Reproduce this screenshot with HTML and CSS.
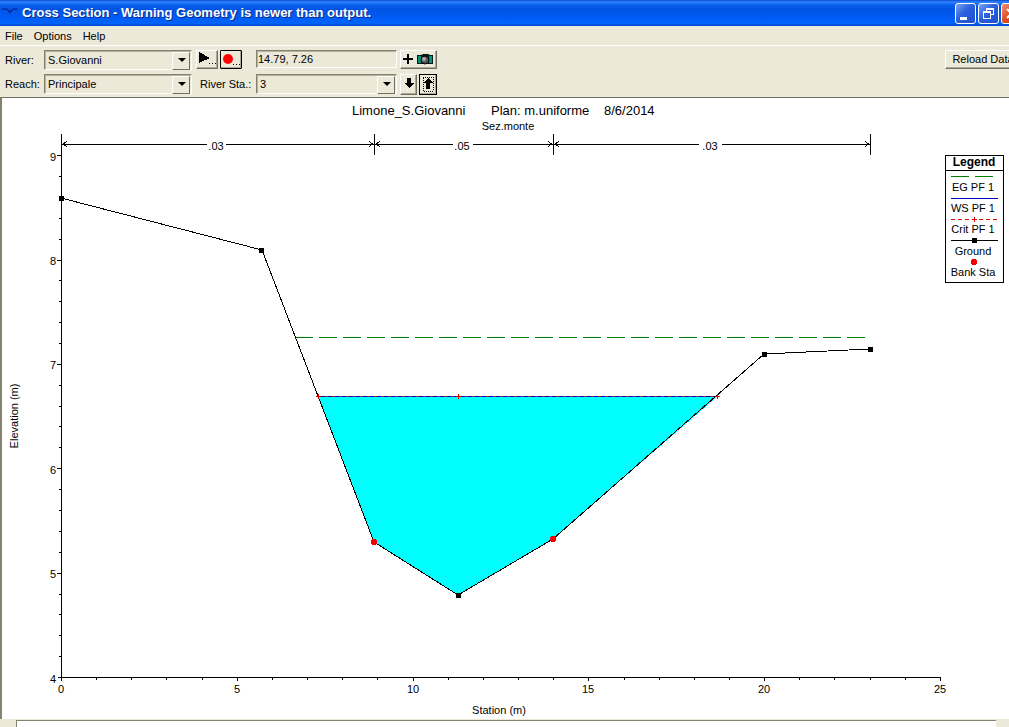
FILE: index.html
```html
<!DOCTYPE html>
<html lang="en">
<head>
<meta charset="utf-8">
<title>Cross Section</title>
<link rel="stylesheet" href="styles.css">
</head>
<body>
<header class="titlebar">
  <svg class="app-icon" width="16" height="16" viewBox="0 0 16 16" aria-hidden="true"><path d="M0 4H5L8 8L11 4H15M6 6H10" fill="none" stroke="#061c86"/></svg>
  <h1 class="title">Cross Section - Warning Geometry is newer than output.</h1>
  <div class="window-buttons">
    <button class="winbtn" aria-label="Minimize"><svg width="19" height="19" viewBox="0 0 19 19"><path d="M4 13H11V16H4Z" fill="#fff"/></svg></button>
    <button class="winbtn" aria-label="Restore"><svg width="19" height="19" viewBox="0 0 19 19" shape-rendering="crispEdges"><path d="M7 4H15V11H12V10H14V6H8V7H7ZM4 7H12V15H4ZM5 9V14H11V9Z" fill="#fff" fill-rule="evenodd"/></svg></button>
    <button class="winbtn close" aria-label="Close"><svg width="19" height="19" viewBox="0 0 19 19"><path d="M5 5L14 14M14 5L5 14" stroke="#fff" stroke-width="2"/></svg></button>
  </div>
</header>
<nav class="menubar">
  <button class="menu">File</button>
  <button class="menu">Options</button>
  <button class="menu">Help</button>
</nav>
<section class="toolbar">
  <div class="row">
    <label class="label" for="river">River:</label>
    <span class="combo"><select id="river"><option>S.Giovanni</option></select></span>
    <span class="play-group">
      <button class="btn play" aria-label="Animate"><svg width="18" height="16" viewBox="0 0 18 16" shape-rendering="crispEdges"><path d="M1 1L12 7L1 12Z"/><path d="M11 12h1v1h-1zM14 12h1v1h-1zM17 12h1v1h-1z"/></svg></button>
      <button class="btn record" aria-label="Record"><svg width="19" height="16" viewBox="0 0 19 16"><circle cx="6" cy="8" r="5" fill="#f00"/><path d="M11 13h1v1h-1zM14 13h1v1h-1zM17 13h1v1h-1z"/></svg></button>
    </span>
    <input class="readout" type="text" value="14.79, 7.26" aria-label="Coordinates" readonly>
    <button class="btn camera" aria-label="Add snapshot"><svg width="33" height="16" viewBox="0 0 33 16"><path d="M5 3h2v4h4v2H7v4H5V9H1V7h4z"/><path d="M15 4h4l2-1h5l2 1h3v9H15z" fill="#001c1a"/><path d="M16 5h3v7h-3zM27 5h3v7h-3z" fill="#089080"/><circle cx="23" cy="9" r="4" fill="#555" stroke="#000"/><circle cx="22" cy="8" r="2" fill="#aaa"/></svg></button>
    <button class="btn reload">Reload Data</button>
  </div>
  <div class="row">
    <label class="label" for="reach">Reach:</label>
    <span class="combo"><select id="reach"><option>Principale</option></select></span>
    <label class="station-label" for="station">River Sta.:</label>
    <span class="combo station"><select id="station"><option>3</option></select></span>
    <button class="btn arrow" aria-label="Next station"><svg width="14" height="16" viewBox="0 0 14 16" shape-rendering="crispEdges"><path d="M5 2h4v5h3L7 12L2 7h3z"/></svg></button>
    <button class="btn arrow focused" aria-label="Previous station"><svg width="14" height="16" viewBox="0 0 14 16" shape-rendering="crispEdges"><path d="M5 13h4V7h3L7 2L2 7h3z"/><path d="M2 1H12V15H2Z" fill="none" stroke="#000" stroke-dasharray="1 1"/></svg></button>
  </div>
</section>
<main class="plot">
<svg class="chart" viewBox="2 98 1007 621" role="img" aria-label="Cross section plot" shape-rendering="crispEdges">
  <defs>
    <marker id="end" markerUnits="userSpaceOnUse" markerWidth="6" markerHeight="8" refX="5" refY="4" orient="auto-start-reverse"><path d="M0 1L5 4L0 7L2 4Z"/></marker>
    <path id="sq" d="M-2 -2H3V3H-2Z"/>
    <path id="plus" d="M-2 0H3M0 -2V3" stroke="#e00000"/>
  </defs>
  <g class="heading">
    <text x="352" y="115">Limone_S.Giovanni</text>
    <text x="491" y="115">Plan: m.uniforme</text>
    <text x="604" y="115">8/6/2014</text>
  </g>
  <text class="mid" x="508" y="130">Sez.monte</text>

  <path class="line" d="M374 134V155M553 134V155M870 134V155"/>
  <path class="line" marker-start="url(#end)" d="M62 144H207"/>
  <path class="line" marker-end="url(#end)" d="M226 144H374"/>
  <path class="line" marker-start="url(#end)" d="M375 144H453"/>
  <path class="line" marker-end="url(#end)" d="M473 144H553"/>
  <path class="line" marker-start="url(#end)" d="M554 144H699"/>
  <path class="line" marker-end="url(#end)" d="M722 144H870"/>
  <g class="mid"><text x="216" y="150">.03</text><text x="462" y="150">.05</text><text x="710" y="150">.03</text></g>

  <path class="line" d="M61 134V681M58 677H940"/>
  <path class="line" d="M57 155H61M57 260H61M57 364H61M57 468H61M57 573H61"/>
  <path class="line" d="M59 176H61M59 197H61M59 218H61M59 239H61M59 280H61M59 301H61M59 322H61M59 343H61M59 385H61M59 406H61M59 426H61M59 447H61M59 489H61M59 510H61M59 531H61M59 552H61M59 594H61M59 614H61M59 635H61M59 656H61"/>
  <path class="line" d="M237 677V681M413 677V681M588 677V681M764 677V681M940 677V681"/>
  <path class="line" d="M96 677V680M131 677V680M166 677V680M202 677V680M272 677V680M307 677V680M342 677V680M377 677V680M448 677V680M483 677V680M518 677V680M553 677V680M624 677V680M659 677V680M694 677V680M729 677V680M799 677V680M834 677V680M870 677V680M905 677V680"/>
  <g class="end"><text x="56" y="161">9</text><text x="56" y="265">8</text><text x="56" y="369">7</text><text x="56" y="474">6</text><text x="56" y="578">5</text><text x="56" y="683">4</text></g>
  <g class="mid"><text x="61" y="693">0</text><text x="237" y="693">5</text><text x="413" y="693">10</text><text x="588" y="693">15</text><text x="764" y="693">20</text><text x="940" y="693">25</text><text x="499" y="714">Station (m)</text></g>
  <text class="mid" transform="translate(18 416) rotate(-90)">Elevation (m)</text>

  <path class="water" d="M318 396H718L553 539L458 595L374 542Z"/>
  <path class="energy" d="M295 337H866"/>
  <path class="surface" d="M318 396H718"/>
  <path class="critical" d="M318 396H718"/>
  <path class="line" d="M61 198L262 250L374 542L458 595L553 539L764 354L870 349"/>
  <use href="#plus" x="318" y="396"/><use href="#plus" x="458" y="396"/><use href="#plus" x="717" y="396"/>
  <use href="#sq" x="61" y="198"/><use href="#sq" x="261" y="250"/><use href="#sq" x="458" y="595"/><use href="#sq" x="764" y="354"/><use href="#sq" x="870" y="349"/>
  <circle class="bank" cx="374" cy="542" r="3"/><circle class="bank" cx="553" cy="539" r="3"/>

  <path class="box" d="M945 155H1003V282H945ZM945 170H1003"/>
  <text class="mid strong" x="974" y="166">Legend</text>
  <path class="legend-energy" d="M951 176H969M975 176H993"/>
  <path class="surface" d="M951 198H998"/>
  <path class="legend-critical" d="M951 219H998"/><use href="#plus" x="974" y="219"/>
  <path class="line" d="M951 240H998"/><use href="#sq" x="974" y="240"/>
  <circle class="bank" cx="974" cy="262" r="3"/>
  <g class="mid"><text x="973" y="191">EG PF 1</text><text x="973" y="212">WS PF 1</text><text x="973" y="233">Crit PF 1</text><text x="973" y="255">Ground</text><text x="973" y="276">Bank Sta</text></g>
</svg>
</main>
<footer class="scrollbar"><span class="scroll-end"></span><span class="scroll-track"></span><span class="scroll-end"></span></footer>
</body>
</html>
```
FILE: styles.css
```css
* { box-sizing: border-box; }
body {
  margin: 0;
  min-height: 100vh;
  display: flex;
  flex-direction: column;
  overflow: hidden;
  background: #ece9d8;
  color: #000;
  font: 11px/14px "Liberation Sans", Arial, sans-serif;
}
button, select, input { font: inherit; color: inherit; border-radius: 0; }
button { padding: 0; }
svg { flex: none; }

.titlebar {
  height: 26px;
  display: flex;
  align-items: center;
  overflow: hidden;
  background: linear-gradient(#0a4ad0 0, #2f83ff 2px, #0a60f0 5px, #0054e3 9px, #005cf5 18px, #0064fc 23px, #0046d0 26px);
}
.app-icon { margin: 0 4px 0 2px; }
.title {
  margin: 0;
  color: #fff;
  font: bold 13px/16px "Liberation Sans", Arial, sans-serif;
  text-shadow: 1px 1px #0a2a88;
  white-space: nowrap;
}
.window-buttons { display: flex; gap: 2px; margin-left: auto; margin-right: -13px; }
.winbtn {
  width: 21px;
  height: 21px;
  border: 1px solid #fff;
  border-radius: 3px;
  background: linear-gradient(135deg, #7ba2f0, #2b60de 45%, #1d50cc);
}
.winbtn svg { display: block; }
.close { background: linear-gradient(135deg, #f09070, #dd4a24 50%, #c03010); }

.menubar {
  height: 20px;
  display: flex;
  align-items: center;
  gap: 11px;
  padding: 0 5px;
  border-bottom: 1px solid #fff;
}
.menu { border: 0; background: none; }

.toolbar {
  display: flex;
  flex-direction: column;
  gap: 2px;
  padding: 3px 0 2px 5px;
  overflow: hidden;
}
.row { display: flex; align-items: center; height: 22px; }
.label { width: 39px; flex: none; }
.combo, .readout {
  border: 1px solid;
  border-color: #85826f #fff #fff #85826f;
  box-shadow: inset 1px 1px #b5b2a0;
  background: #ece9d8;
}
.combo { position: relative; width: 148px; height: 20px; flex: none; }
.combo select {
  width: 100%;
  height: 18px;
  padding: 0 20px 0 3px;
  border: 0;
  background: none;
  appearance: none;
}
.combo::before {
  content: "";
  position: absolute;
  right: 1px;
  top: 1px;
  width: 16px;
  height: 16px;
  border: 1px solid;
  border-color: #fff #716f64 #716f64 #fff;
  pointer-events: none;
}
.combo::after {
  content: "";
  position: absolute;
  right: 5px;
  top: 7px;
  border: 4px solid transparent;
  border-top-color: #000;
  border-bottom: 0;
  pointer-events: none;
}
.play-group { display: flex; flex: none; gap: 2px; width: 60px; margin-left: 4px; }
.station-label { width: 56px; margin-left: 8px; flex: none; }
.readout { width: 141px; height: 18px; padding: 0 1px; outline: 0; }
.combo.station { width: 141px; }
.btn {
  height: 19px;
  flex: none;
  display: flex;
  align-items: center;
  justify-content: center;
  border: 1px solid;
  border-color: #fff #716f64 #716f64 #fff;
  box-shadow: inset -1px -1px #aca899;
  background: #ece9d8;
}
.row:first-child .btn, .readout { margin-bottom: 2px; }
.play { width: 22px; }
.record { width: 22px; border-color: #000; border-radius: 1px; }
.camera { width: 37px; margin-left: 3px; }
.arrow { width: 17px; height: 21px; margin-left: 3px; }
.arrow.focused { width: 18px; margin-left: 2px; border-color: #000; }
.reload { width: 76px; margin-left: auto; margin-right: -12px; }

.plot { flex: 1; border-top: 1px solid #716f64; border-left: 2px solid #85826f; background: #fff; }
.chart { display: block; width: 100%; }
.chart text { fill: #000; }
.heading { font-size: 13px; }
.mid { text-anchor: middle; }
.end { text-anchor: end; }
.strong { font-weight: bold; }
.chart .strong { font-size: 12px; }
.line, .box { fill: none; stroke: #000; }
.water { fill: #0ff; }
.energy, .legend-energy { stroke: #008000; fill: none; }
.energy { stroke-dasharray: 18 6; }
.surface { stroke: #0000b8; }
.critical { stroke: #8c2050; stroke-dasharray: 3 4; }
.legend-critical { stroke: #e00000; stroke-dasharray: 4 3; }
.bank { fill: #f00000; }

.scrollbar { height: 8px; display: flex; background: #ece9d8; border-top: 1px solid #ece9d8; }
.scroll-end { width: 16px; background: #ece9d8; }
.scroll-end:last-child { width: 13px; }
.scroll-track { flex: 1; background: #fff; border-top: 1px solid #85826f; border-left: 1px solid #85826f; }
```
